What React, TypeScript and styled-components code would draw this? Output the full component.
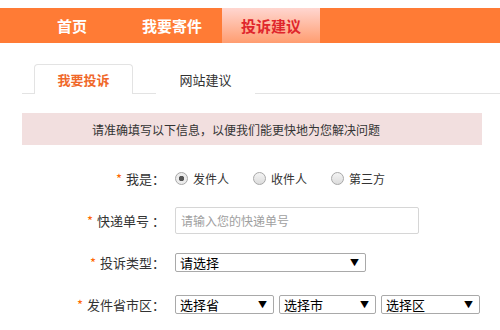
import styled, { createGlobalStyle } from "styled-components"

const GlobalStyle = createGlobalStyle`
  html, body {
    margin: 0;
    padding: 0;
    background: #fff;
  }
  body {
    font-family: "Noto Sans CJK SC", "Noto Sans", sans-serif;
    color: #333;
  }
`

const navItems = ["首页", "我要寄件", "投诉建议"]

export default function App() {
  return (
    <>
      <GlobalStyle />
      <Page>
        <Nav>
          {navItems.map((item, i) => (
            <NavItem key={item} active={i === 2}>{item}</NavItem>
          ))}
        </Nav>

        <Tabs>
          <Tab active>我要投诉</Tab>
          <Tab>网站建议</Tab>
        </Tabs>

        <Notice>请准确填写以下信息，以便我们能更快地为您解决问题</Notice>

        <Form>
          <Row>
            <Label><Star>*</Star>我是：</Label>
            <Radios>
              <RadioItem><Radio checked />发件人</RadioItem>
              <RadioItem><Radio />收件人</RadioItem>
              <RadioItem><Radio />第三方</RadioItem>
            </Radios>
          </Row>
          <Row>
            <Label><Star>*</Star>快递单号 ：</Label>
            <Input placeholder="请输入您的快递单号" />
          </Row>
          <Row>
            <Label><Star>*</Star>投诉类型：</Label>
            <Select width={191}>
              <span>请选择</span>
              <Arrow>▼</Arrow>
            </Select>
          </Row>
          <Row>
            <Label><Star>*</Star>发件省市区：</Label>
            <Selects>
              <Select width={99}><span>选择省</span><Arrow>▼</Arrow></Select>
              <Select width={97}><span>选择市</span><Arrow>▼</Arrow></Select>
              <Select width={99}><span>选择区</span><Arrow>▼</Arrow></Select>
            </Selects>
          </Row>
        </Form>
      </Page>
    </>
  )
}

const Page = styled.div`
  padding-top: 8px;
  width: 500px;
`

const Nav = styled.div`
  display: flex;
  height: 35px;
  padding-left: 22px;
  background: #ff7b35;
`

const NavItem = styled.div<{ active?: boolean }>`
  width: ${p => (p.active ? 98 : 100)}px;
  display: flex;
  align-items: center;
  justify-content: center;
  font-size: 15px;
  font-weight: 700;
  color: ${p => (p.active ? "#e0262c" : "#fff")};
  background: ${p => (p.active ? "linear-gradient(#ffd6d0, #ff9d70)" : "transparent")};
`

const Tabs = styled.div`
  display: flex;
  margin: 21px 0 0 22px;
  padding-left: 12px;
  border-bottom: 1px solid #e3e3e3;
  height: 29px;
`

const Tab = styled.div<{ active?: boolean }>`
  width: 99px;
  height: 30px;
  box-sizing: border-box;
  margin-right: 23px;
  display: flex;
  align-items: center;
  justify-content: center;
  font-size: 13px;
  font-weight: ${p => (p.active ? 700 : 400)};
  color: ${p => (p.active ? "#f0682a" : "#333")};
  background: #fff;
  border: 1px solid ${p => (p.active ? "#e3e3e3" : "transparent")};
  border-bottom: none;
  border-radius: 4px 4px 0 0;
`

const Notice = styled.div`
  margin: 19px 18px 0 22px;
  height: 32px;
  padding-left: 70px;
  display: flex;
  align-items: center;
  background: #f2dfdf;
  font-size: 12px;
  color: #333;
`

const Form = styled.div`
  display: flex;
  flex-direction: column;
  gap: 14px;
  margin-top: 19px;
`

const Row = styled.div`
  display: flex;
  align-items: center;
  height: 28px;
`

const Label = styled.div`
  width: 165px;
  padding-right: 10px;
  text-align: right;
  font-size: 13px;
  color: #333;
  white-space: nowrap;
`

const Star = styled.span`
  color: #f60;
  margin-right: 4px;
`

const Radios = styled.div`
  display: flex;
  gap: 24px;
`

const RadioItem = styled.label`
  display: flex;
  align-items: center;
  gap: 5px;
  font-size: 12px;
  color: #333;
`

const Radio = styled.span<{ checked?: boolean }>`
  width: 11px;
  height: 11px;
  border-radius: 50%;
  border: 1px solid #a8a8a8;
  background: ${p =>
    p.checked
      ? "radial-gradient(circle, #555 0 2.5px, #ececec 3px)"
      : "linear-gradient(#f4f4f4, #dcdcdc)"};
`

const Input = styled.input`
  width: 244px;
  height: 27px;
  box-sizing: border-box;
  border: 1px solid #d6d6d6;
  border-radius: 2px;
  padding: 0 5px;
  font-family: inherit;
  font-size: 12px;
  outline: none;
  &::placeholder {
    color: #a0a0a0;
  }
`

const Selects = styled.div`
  display: flex;
  gap: 5px;
`

const Select = styled.div<{ width: number }>`
  width: ${p => p.width}px;
  height: 19px;
  box-sizing: border-box;
  border: 1px solid #a9a9a9;
  border-radius: 2px;
  padding: 0 6px 0 4px;
  display: flex;
  align-items: center;
  justify-content: space-between;
  font-size: 13px;
  color: #000;
`

const Arrow = styled.span`
  font-size: 9px;
  color: #000;
`
